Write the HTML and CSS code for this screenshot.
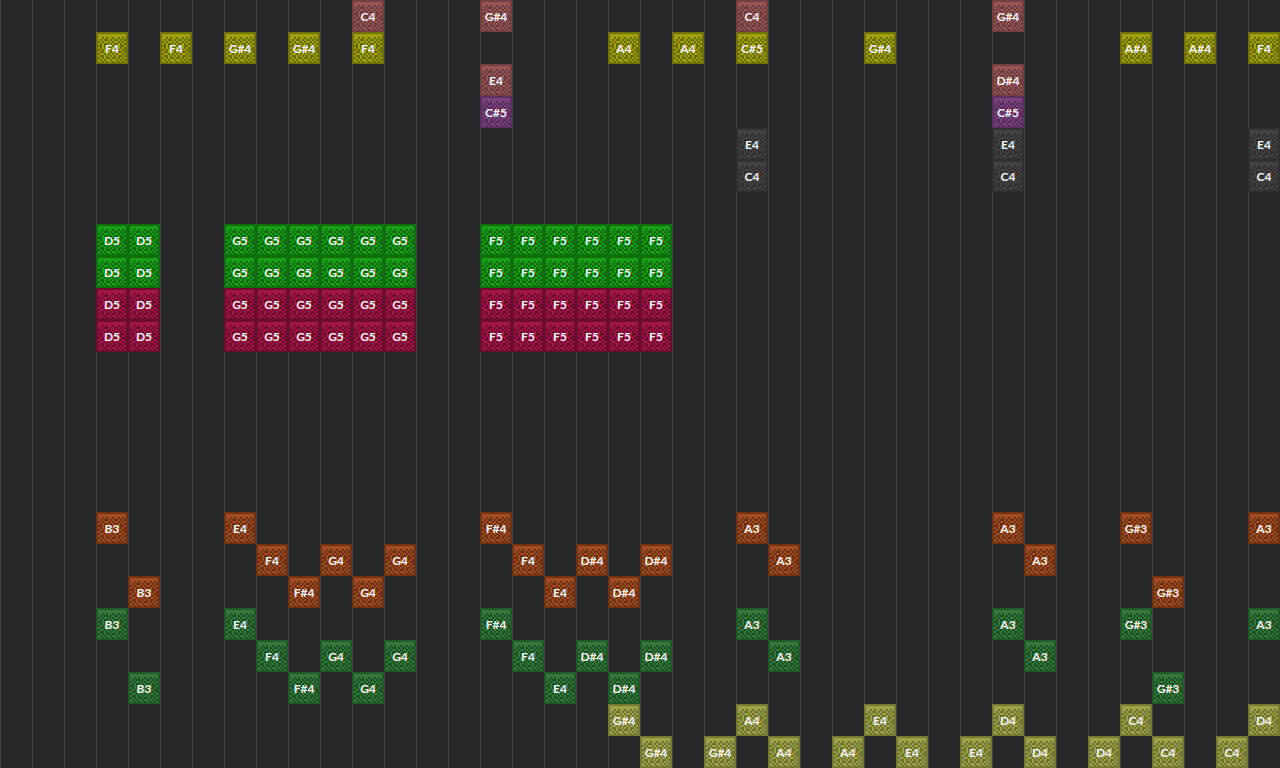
FILE: index.html
```html
<!DOCTYPE html>
<html lang="en">
<head>
<meta charset="utf-8">
<title>Note editor</title>
<link rel="stylesheet" href="styles.css">
</head>
<body>
<svg class="defs" aria-hidden="true">
  <symbol id="weave" viewBox="0 0 16 16"><path id="weave-dots" shape-rendering="crispEdges"/></symbol>
</svg>
<main class="roll" id="roll" aria-label="Note grid"></main>
<script src="notes.js"></script>
</body>
</html>
```

FILE: styles.css
```css
body {
  margin: 0;
  background: #28282a;
}

.defs {
  position: absolute;
  width: 0;
  height: 0;
}

.roll {
  display: grid;
  grid-template-columns: repeat(auto-fill, 32px);
  grid-auto-rows: 32px;
  min-height: 100vh;
  overflow: hidden;
  background: repeating-linear-gradient(to right, #464648 0 1px, #28282a 1px 32px);
}

.note {
  display: grid;
  place-items: center;
  box-sizing: border-box;
  width: 32px;
  height: 32px;
  border: 2px solid var(--edge);
  background: var(--face);
  color: #f4f4f4;
  font: 700 12px/28px Lato, sans-serif;
}

.note-art {
  grid-area: 1 / 1;
  width: 32px;
  height: 32px;
  margin: -2px;
  fill: var(--dot);
}

.note-name {
  grid-area: 1 / 1;
  z-index: 1;
  padding-top: 1px;
  white-space: nowrap;
}

.rose { --edge: #743f40; --face: #985556; --dot: #6a3b3c; }
.yellow { --edge: #717208; --face: #a0a10e; --dot: #696a09; }
.violet { --edge: #5b2f5e; --face: #7c4280; --dot: #552c59; }
.gray { --edge: #2f2f30; --face: #444445; --dot: #2f2f30; }
.lime { --edge: #106e11; --face: #18a019; --dot: #0f6810; }
.crimson { --edge: #6c0d30; --face: #a51547; --dot: #6c0d30; }
.orange { --edge: #703214; --face: #a34c1f; --dot: #693015; }
.green { --edge: #22592a; --face: #317b3a; --dot: #1f4e25; }
.olive { --edge: #757931; --face: #9ea349; --dot: #6e7230; }
```

FILE: notes.js
```js
const weave = [
  "................",
  "................",
  "...#.#..#..#.#..",
  "..#.##.#.##.#.#.",
  ".#.#..#.#..#.#..",
  "..#.##.#.##.#.#.",
  ".##.#.#.#.#.##..",
  "..#.#.##.##.#.#.",
  ".#.#.#.#.#.#.##.",
  "..##.#.#.#.##.#.",
  ".#..#.#.#.#..#..",
  "..##.#.#.#.##.#.",
  ".#.#.##.##.#.#..",
  "..#.#..#..#.#.#.",
  "...#.#..#..#.#..",
  "................"
];

document.getElementById("weave-dots").setAttribute("d",
  weave.flatMap((line, y) => [...line].map((c, x) =>
    c === "#" ? `M${x} ${y}h1v1h-1z` : "")).join(""));

const six = (start, name) => Array.from({ length: 6 }, (_, i) => `${start + i}:${name}`).join(" ");
const chord = `3:D5 4:D5 ${six(7, "G5")} ${six(15, "F5")}`;
const high = "3:B3 7:E4 15:F#4 23:A3 31:A3 35:G#3 39:A3";
const middle = "8:F4 10:G4 12:G4 16:F4 18:D#4 20:D#4 24:A3 32:A3";
const low = "4:B3 9:F#4 11:G4 17:E4 19:D#4 36:G#3";

const layers = [
  [0, "rose", "11:C4 15:G#4 23:C4 31:G#4"],
  [1, "yellow", "3:F4 5:F4 7:G#4 9:G#4 11:F4 19:A4 21:A4 23:C#5 27:G#4 35:A#4 37:A#4 39:F4"],
  [2, "rose", "15:E4 31:D#4"],
  [3, "violet", "15:C#5 31:C#5"],
  [4, "gray", "23:E4 31:E4 39:E4"],
  [5, "gray", "23:C4 31:C4 39:C4"],
  [7, "lime", chord],
  [8, "lime", chord],
  [9, "crimson", chord],
  [10, "crimson", chord],
  [16, "orange", high],
  [17, "orange", middle],
  [18, "orange", low],
  [19, "green", high],
  [20, "green", middle],
  [21, "green", low],
  [22, "olive", "19:G#4 23:A4 27:E4 31:D4 35:C4 39:D4"],
  [23, "olive", "20:G#4 22:G#4 24:A4 26:A4 28:E4 30:E4 32:D4 34:D4 36:C4 38:C4"]
];

document.getElementById("roll").innerHTML = layers.map(([row, color, notes]) =>
  notes.split(" ").map(note => {
    const [tick, name] = note.split(":");
    return `<div class="note ${color}" style="grid-area:${row + 1}/${+tick + 1}">` +
      `<svg class="note-art" aria-hidden="true"><use href="#weave"/></svg>` +
      `<span class="note-name">${name}</span></div>`;
  }).join("")).join("");
```
